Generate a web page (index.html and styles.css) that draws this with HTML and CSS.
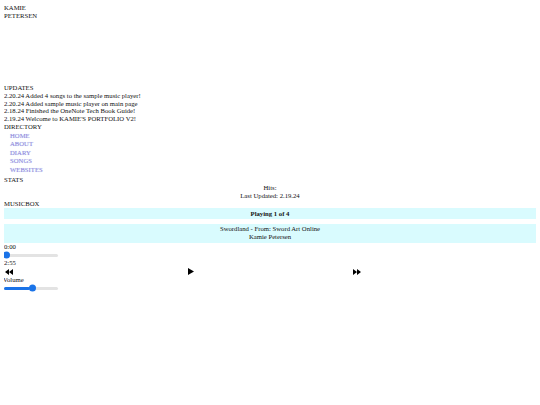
FILE: index.html
```html
<!DOCTYPE html>
<html>
<head>
<meta charset="utf-8">
<title>Kamie Petersen</title>
<link rel="stylesheet" href="styles.css">
</head>
<body>
<header class="title">KAMIE<br>PETERSEN</header>
<div class="banner"></div>
<section class="updates">
  <div>UPDATES</div>
  <div>2.20.24 Added 4 songs to the sample music player!</div>
  <div>2.20.24 Added sample music player on main page</div>
  <div>2.18.24 Finished the OneNote Tech Book Guide!</div>
  <div>2.19.24 Welcome to KAMIE'S PORTFOLIO V2!</div>
</section>
<section class="directory">
  <div>DIRECTORY</div>
  <ul class="nav">
    <li><a href="#">HOME</a></li>
    <li><a href="#">ABOUT</a></li>
    <li><a href="#">DIARY</a></li>
    <li><a href="#">SONGS</a></li>
    <li><a href="#">WEBSITES</a></li>
  </ul>
</section>
<section class="stats">
  <div>STATS</div>
  <div class="stats-body">
    <div>Hits:</div>
    <div>Last Updated: 2.19.24</div>
  </div>
</section>
<section class="musicbox">
  <div>MUSICBOX</div>
  <div class="box playing">Playing 1 of 4</div>
  <div class="box song">
    <div>Swordland - From: Sword Art Online</div>
    <div>Kamie Petersen</div>
  </div>
  <div class="time">0:00</div>
  <div class="slider"><div class="track"><div class="fill" style="width:0%"></div><div class="thumb" style="left:0%"></div></div></div>
  <div class="time">2:55</div>
  <div class="controls">
    <span class="btn prev"><svg width="8" height="6" viewBox="0 0 8 6"><path d="M4 0L0 3L4 6Z M8 0L4 3L8 6Z" fill="#000"/></svg></span>
    <span class="btn play"><svg width="6" height="7" viewBox="0 0 6 7"><path d="M0 0L6 3.5L0 7Z" fill="#000"/></svg></span>
    <span class="btn next"><svg width="8" height="6" viewBox="0 0 8 6"><path d="M0 0L4 3L0 6Z M4 0L8 3L4 6Z" fill="#000"/></svg></span>
  </div>
  <div class="volume-label">Volume</div>
  <div class="slider"><div class="track"><div class="fill" style="width:48%"></div><div class="thumb" style="left:48%"></div></div></div>
</section>
</body>
</html>
```
FILE: styles.css
```css
html { background: #fff; }
body {
  margin: 4px;
  font-family: "Liberation Serif", "Times New Roman", serif;
  font-size: 6.7px;
  line-height: 8px;
  color: #111;
}
.title { line-height: 8px; }
.banner { height: 64px; }
.updates div { line-height: 7.8px; }
.nav {
  list-style: none;
  margin: 1px 0 2px 0;
  padding: 0 0 0 6px;
}
.nav li { line-height: 8.5px; }
.nav a {
  color: #9a82d6;
  text-decoration: none;
  text-shadow: 0 0 1px #a9d8ff;
}
.stats-body {
  text-align: center;
  padding-top: 0;
  line-height: 8px;
}
.box {
  background: #d9fbfe;
  text-align: center;
}
.playing {
  font-weight: bold;
  height: 11px;
  line-height: 11px;
}
.song {
  margin-top: 5px;
  padding: 1px 0 2px;
}
.slider {
  width: 54px;
  height: 8px;
  display: flex;
  align-items: center;
}
.track {
  position: relative;
  width: 100%;
  height: 3px;
  border-radius: 2px;
  background: #e3e3e3;
}
.fill {
  height: 100%;
  border-radius: 2px;
  background: #1a73e8;
}
.thumb {
  position: absolute;
  top: 50%;
  width: 7px;
  height: 7px;
  border-radius: 50%;
  background: #1a73e8;
  transform: translate(-1px, -50%);
}
.controls {
  display: grid;
  grid-template-columns: 183px 165px 1fr;
  height: 9px;
  align-items: center;
  padding-left: 1px;
}
.btn { display: flex; align-items: center; }
.btn svg { display: block; }
.volume-label { margin-left: -1px; }
```
